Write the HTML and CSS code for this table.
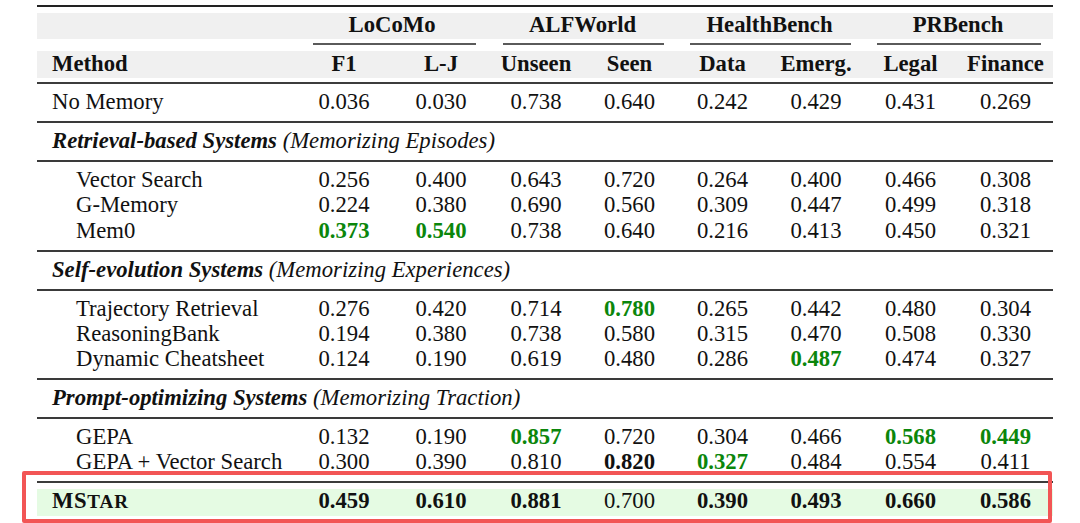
FILE: index.html
```html
<!DOCTYPE html>
<html>
<head>
<meta charset="utf-8">
<link rel="stylesheet" href="styles.css">
</head>
<body>
<div class="table">
  <div class="toprule"></div>
  <div class="grid band groups">
    <div></div>
    <div class="grp">LoCoMo</div>
    <div class="grp">ALFWorld</div>
    <div class="grp">HealthBench</div>
    <div class="grp">PRBench</div>
  </div>
  <div class="grid cmids">
    <div></div>
    <div class="cmid first"></div>
    <div class="cmid"></div>
    <div class="cmid"></div>
    <div class="cmid"></div>
  </div>
  <div class="grid band cols">
    <div class="name top">Method</div>
    <div>F1</div><div>L-J</div><div>Unseen</div><div>Seen</div><div>Data</div><div>Emerg.</div><div>Legal</div><div>Finance</div>
  </div>
  <div class="midrule"></div>

  <div class="block">
    <div class="grid row"><div class="name top">No Memory</div><div>0.036</div><div>0.030</div><div>0.738</div><div>0.640</div><div>0.242</div><div>0.429</div><div>0.431</div><div>0.269</div></div>
  </div>
  <div class="rule"></div>

  <div class="block">
    <div class="section"><b><i>Retrieval-based Systems</i></b> <i>(Memorizing Episodes)</i></div>
  </div>
  <div class="rule"></div>
  <div class="block">
    <div class="grid row"><div class="name">Vector Search</div><div>0.256</div><div>0.400</div><div>0.643</div><div>0.720</div><div>0.264</div><div>0.400</div><div>0.466</div><div>0.308</div></div>
    <div class="grid row"><div class="name">G-Memory</div><div>0.224</div><div>0.380</div><div>0.690</div><div>0.560</div><div>0.309</div><div>0.447</div><div>0.499</div><div>0.318</div></div>
    <div class="grid row"><div class="name">Mem0</div><div class="g">0.373</div><div class="g">0.540</div><div>0.738</div><div>0.640</div><div>0.216</div><div>0.413</div><div>0.450</div><div>0.321</div></div>
  </div>
  <div class="rule"></div>

  <div class="block">
    <div class="section"><b><i>Self-evolution Systems</i></b> <i>(Memorizing Experiences)</i></div>
  </div>
  <div class="rule"></div>
  <div class="block">
    <div class="grid row"><div class="name">Trajectory Retrieval</div><div>0.276</div><div>0.420</div><div>0.714</div><div class="g">0.780</div><div>0.265</div><div>0.442</div><div>0.480</div><div>0.304</div></div>
    <div class="grid row"><div class="name">ReasoningBank</div><div>0.194</div><div>0.380</div><div>0.738</div><div>0.580</div><div>0.315</div><div>0.470</div><div>0.508</div><div>0.330</div></div>
    <div class="grid row"><div class="name">Dynamic Cheatsheet</div><div>0.124</div><div>0.190</div><div>0.619</div><div>0.480</div><div>0.286</div><div class="g">0.487</div><div>0.474</div><div>0.327</div></div>
  </div>
  <div class="rule"></div>

  <div class="block">
    <div class="section"><b><i>Prompt-optimizing Systems</i></b> <i>(Memorizing Traction)</i></div>
  </div>
  <div class="rule"></div>
  <div class="block">
    <div class="grid row"><div class="name">GEPA</div><div>0.132</div><div>0.190</div><div class="g">0.857</div><div>0.720</div><div>0.304</div><div>0.466</div><div class="g">0.568</div><div class="g">0.449</div></div>
    <div class="grid row"><div class="name">GEPA + Vector Search</div><div>0.300</div><div>0.390</div><div>0.810</div><div class="b">0.820</div><div class="g">0.327</div><div>0.484</div><div>0.554</div><div>0.411</div></div>
  </div>
  <div class="midrule"></div>

  <div class="grid ours">
    <div class="name top mstar">MS<span class="sc">tar</span></div><div class="b">0.459</div><div class="b">0.610</div><div class="b">0.881</div><div>0.700</div><div class="b">0.390</div><div class="b">0.493</div><div class="b">0.660</div><div class="b">0.586</div>
  </div>
</div>
<div class="highlight"></div>
</body>
</html>
```

FILE: styles.css
```css
html, body {
  margin: 0;
  background: #ffffff;
}

body {
  font-family: "Liberation Serif", "Times New Roman", serif;
  font-size: 22.7px;
  color: #111111;
  position: relative;
  height: 523px;
  overflow: hidden;
}

.table {
  margin: 5px 0 0 37px;
  width: 1016px;
}

.grid {
  display: grid;
  grid-template-columns: 258px 98px 96px 94px 93px 93px 94px 95px 95px;
}

.toprule {
  height: 2px;
  background: #222222;
  margin-bottom: 6px;
}

.band {
  background: #f0f0f0;
  font-weight: bold;
}

.groups {
  line-height: 23px;
  padding-bottom: 3px;
}

.grp {
  grid-column: span 2;
  text-align: center;
}

.cmids {
  height: 2px;
  margin: 4px 0 6px;
}

.cmid {
  grid-column: span 2;
  height: 2px;
  background: #5a5a5a;
  margin: 0 12px 0 14px;
}

.cmid.first {
  margin-left: 18px;
  margin-right: 13px;
}

.cols {
  line-height: 25px;
  padding-bottom: 2px;
  margin-bottom: 4px;
}

.cols > div,
.row > div,
.ours > div {
  text-align: center;
}

.midrule {
  height: 2px;
  background: #3c3c3c;
}

.rule {
  height: 2px;
  background: #3a3a3a;
}

.block {
  padding: 5px 0 6.7px;
}

.row {
  line-height: 25.3px;
}

.section {
  line-height: 25.3px;
  padding-left: 15px;
}

.grid > .name {
  text-align: left;
  padding-left: 39px;
  white-space: nowrap;
}

.grid > .name.top {
  padding-left: 15px;
}

.g {
  color: #0b860b;
  font-weight: bold;
}

.b {
  font-weight: bold;
}

.ours {
  margin-top: 6px;
  background: #e5fbe3;
  line-height: 23px;
  padding-bottom: 3px;
}

.mstar {
  font-weight: bold;
  letter-spacing: 0.6px;
}

.mstar .sc {
  font-size: 0.84em;
  text-transform: uppercase;
  letter-spacing: 1px;
}

.highlight {
  position: absolute;
  left: 22px;
  top: 471px;
  width: 1030px;
  height: 52px;
  box-sizing: border-box;
  border: 4px solid #f25555;
  border-radius: 2px;
}
```
